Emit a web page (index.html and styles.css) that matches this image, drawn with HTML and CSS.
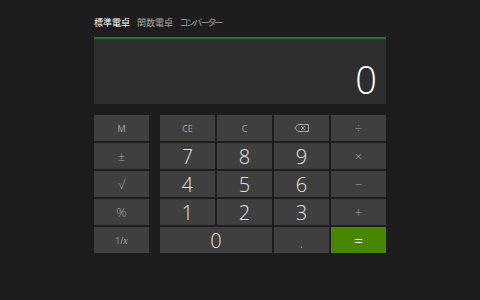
FILE: index.html
```html
<!DOCTYPE html>
<html lang="ja">
<head>
<meta charset="utf-8">
<title>電卓</title>
<link rel="stylesheet" href="styles.css">
</head>
<body>
<div class="app">
  <nav class="tabs">
    <span class="tab active">標準電卓</span>
    <span class="tab">関数電卓</span>
    <span class="tab kana">コンバーター</span>
  </nav>
  <div class="display"><span class="value">0</span></div>
  <div class="pad">
    <div class="mem">
      <button class="key small">M</button>
      <button class="key sym">±</button>
      <button class="key sym">√</button>
      <button class="key sym">%</button>
      <button class="key tiny">1/<i>x</i></button>
    </div>
    <div class="grid">
      <button class="key small">CE</button>
      <button class="key small">C</button>
      <button class="key small"><svg class="bksp" width="15" height="8" viewBox="0 0 15 8"><path d="M4 0.5 H14.5 V7.5 H4 L0.8 4 Z" fill="none" stroke="#a8a8a8" stroke-width="1"/><path d="M7 2 L11 6 M11 2 L7 6" stroke="#a8a8a8" stroke-width="1"/></svg></button>
      <button class="key sym">÷</button>
      <button class="key digit">7</button>
      <button class="key digit">8</button>
      <button class="key digit">9</button>
      <button class="key sym">×</button>
      <button class="key digit">4</button>
      <button class="key digit">5</button>
      <button class="key digit">6</button>
      <button class="key sym">−</button>
      <button class="key digit">1</button>
      <button class="key digit">2</button>
      <button class="key digit">3</button>
      <button class="key sym">+</button>
      <button class="key digit zero">0</button>
      <button class="key digit dot">.</button>
      <button class="key equals">=</button>
    </div>
  </div>
</div>
</body>
</html>
```
FILE: styles.css
```css
html, body {
  margin: 0;
  padding: 0;
  background: #1d1d1d;
  width: 480px;
  height: 300px;
  overflow: hidden;
}
.app {
  width: 292px;
  margin: 0 auto;
  padding-top: 17px;
  font-family: "Noto Sans CJK JP", "Noto Sans", sans-serif;
}
.tabs {
  display: flex;
  height: 12px;
  line-height: 12px;
  font-size: 9px;
  font-feature-settings: "palt";
  margin-bottom: 8px;
}
.tab {
  color: #a6a6a6;
  margin-right: 7px;
}
.tab.active {
  color: #ffffff;
}
.tab.kana {
  letter-spacing: -1.5px;
}
.display {
  height: 65px;
  border-top: 2px solid #1d7a1d;
  background: #2e2e2e;
  display: flex;
  align-items: flex-end;
  justify-content: flex-end;
  padding-right: 9px;
  box-sizing: content-box;
}
.value {
  font-family: "Open Sans", sans-serif;
  font-weight: 300;
  font-size: 38px;
  line-height: 1;
  color: #ffffff;
  margin-bottom: 6px;
}
.pad {
  display: flex;
  margin-top: 11px;
  gap: 11px;
}
.mem {
  width: 55px;
  display: grid;
  grid-template-rows: repeat(5, 26px);
  row-gap: 2px;
}
.grid {
  width: 226px;
  display: grid;
  grid-template-columns: repeat(4, 55px);
  grid-template-rows: repeat(5, 26px);
  gap: 2px;
}
.key {
  border: 0;
  margin: 0;
  padding: 0;
  background: #3f3f3f;
  color: #a8a8a8;
  display: flex;
  align-items: center;
  justify-content: center;
  font-family: "Open Sans", "DejaVu Sans", sans-serif;
}
.small {
  font-size: 9px;
}
.sym {
  font-size: 13px;
  font-weight: 300;
}
.tiny {
  font-size: 8.5px;
}
.tiny i {
  font-family: "Liberation Serif", serif;
  font-size: 10px;
}
.digit {
  font-size: 20px;
  font-weight: 300;
  color: #e4e4e4;
}
.zero {
  grid-column: span 2;
}
.dot {
  align-items: flex-end;
  font-size: 14px;
  line-height: 1;
  padding-bottom: 3px;
  color: #bdbdbd;
}
.equals {
  background: #478600;
  color: #ffffff;
  font-size: 15px;
}
.bksp {
  display: block;
}
```
